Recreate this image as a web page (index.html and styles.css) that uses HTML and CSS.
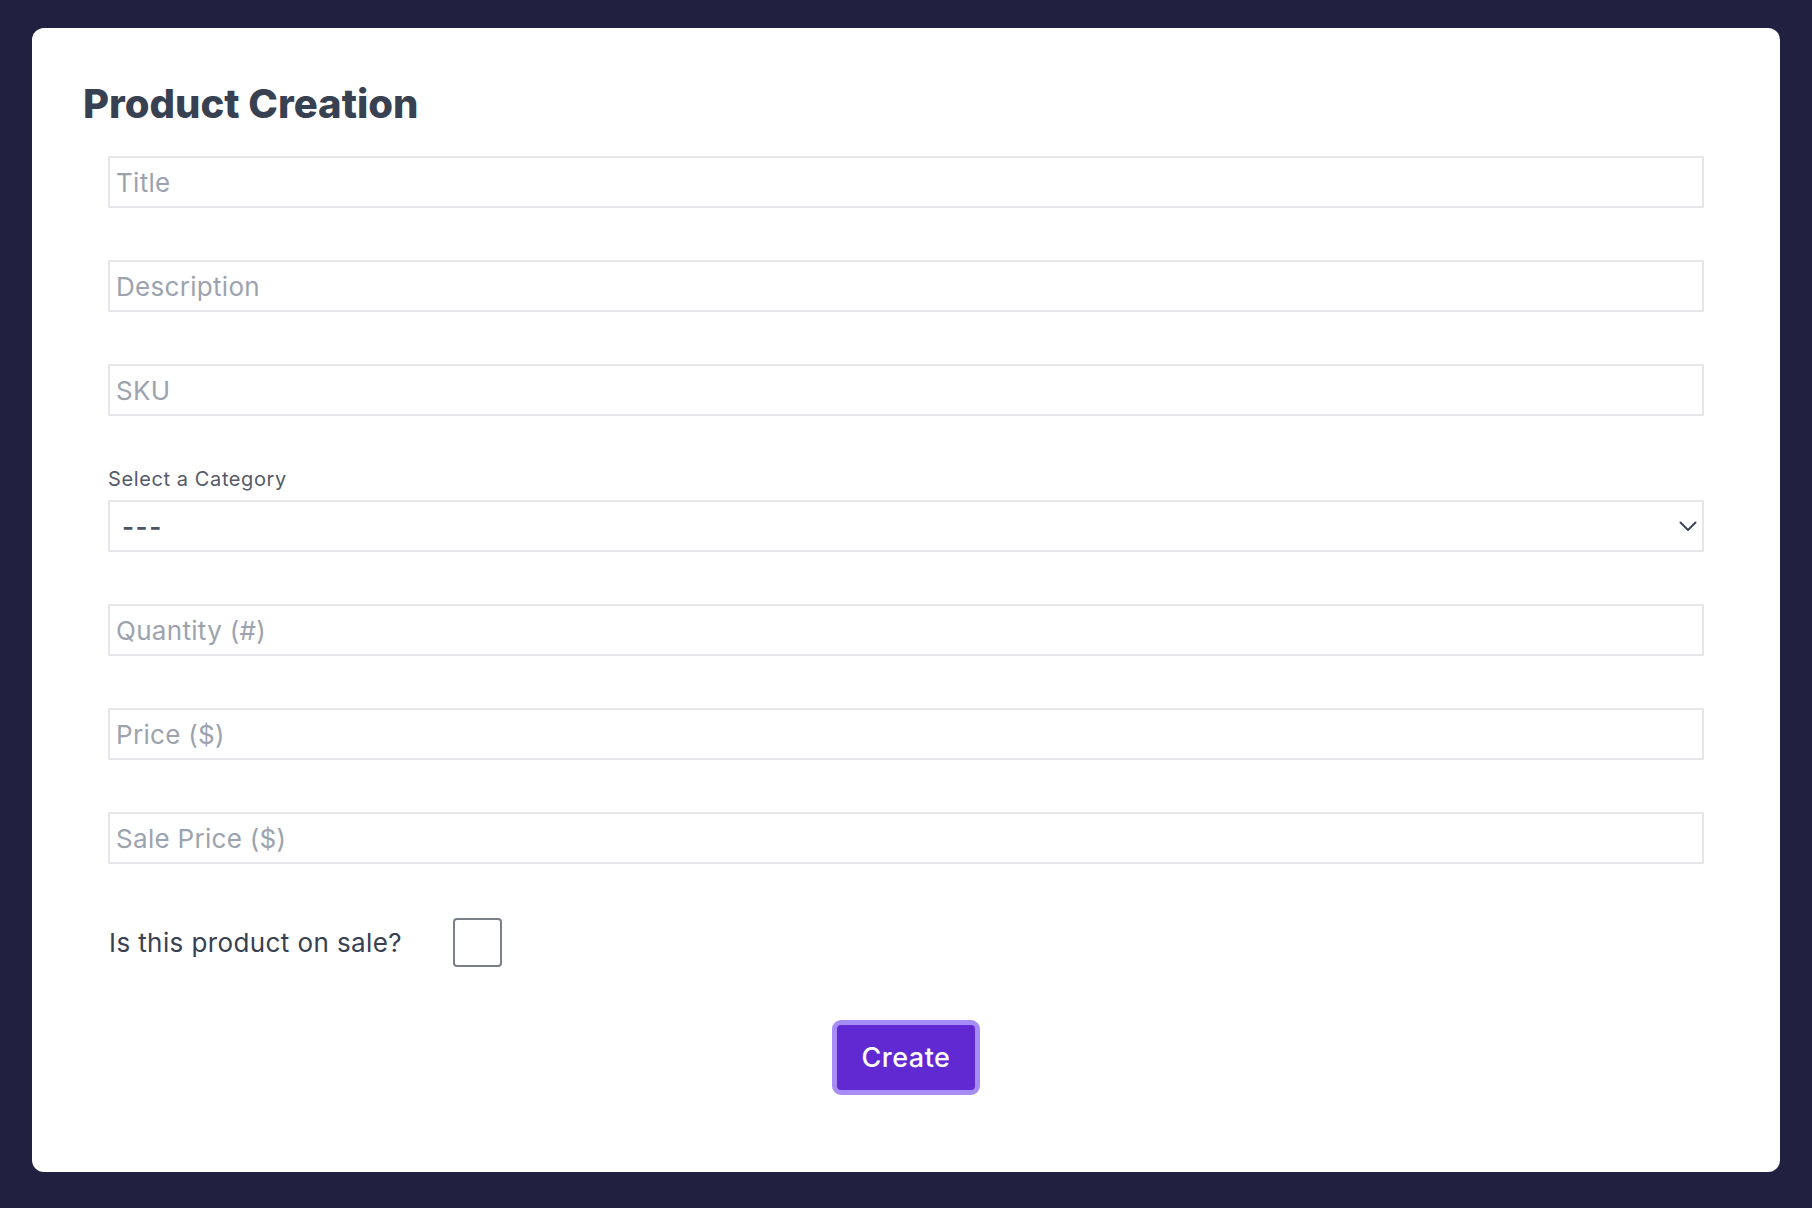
FILE: index.html
```html
<!DOCTYPE html>
<html lang="en">
<head>
<meta charset="utf-8">
<title>Product Creation</title>
<link rel="stylesheet" href="styles.css">
</head>
<body>
  <main class="card">
    <h1 class="card-title">Product Creation</h1>
    <form class="product-form">
      <input class="field" type="text" placeholder="Title">
      <input class="field" type="text" placeholder="Description">
      <input class="field" type="text" placeholder="SKU">
      <div class="select-group">
        <label class="select-label" for="category">Select a Category</label>
        <div class="select-wrap">
          <select id="category" class="field select">
            <option>---</option>
          </select>
          <svg class="chevron" width="18" height="11" viewBox="0 0 18 11" aria-hidden="true">
            <path d="M1.5 1.5 L9 9 L16.5 1.5" fill="none" stroke="#3f4553" stroke-width="2" stroke-linecap="round" stroke-linejoin="round"/>
          </svg>
        </div>
      </div>
      <input class="field" type="text" placeholder="Quantity (#)">
      <input class="field" type="text" placeholder="Price ($)">
      <input class="field" type="text" placeholder="Sale Price ($)">
      <div class="sale-row">
        <label class="sale-label" for="onsale">Is this product on sale?</label>
        <input id="onsale" class="checkbox" type="checkbox">
      </div>
      <div class="actions">
        <button type="button" class="btn-create">Create</button>
      </div>
    </form>
  </main>
</body>
</html>
```

FILE: styles.css
```css
* { box-sizing: border-box; }

html, body {
  margin: 0;
  padding: 0;
}

body {
  background: #202141;
  padding: 28px 32px 36px 32px;
  font-family: Inter, "Open Sans", "Liberation Sans", sans-serif;
}

.card {
  background: #ffffff;
  border-radius: 12px;
  padding: 50px 48px 77px 48px;
}

.card-title {
  margin: 0 0 0 3px;
  font-size: 40px;
  line-height: 52px;
  font-weight: 800;
  color: #374151;
}

.product-form {
  margin: 26px 28px 0 28px;
  display: flex;
  flex-direction: column;
  gap: 52px;
}

.field {
  display: block;
  width: 100%;
  height: 52px;
  border: 2px solid #e5e7eb;
  border-radius: 0;
  background: #ffffff;
  padding: 0 6px;
  font-family: inherit;
  font-size: 26px;
  letter-spacing: 0.3px;
  color: #374151;
  outline: none;
}

.field::placeholder {
  color: #9ca3af;
}

.select-group {
  display: flex;
  flex-direction: column;
  gap: 9px;
}

.select-label {
  font-size: 20px;
  line-height: 23px;
  color: #555a68;
  letter-spacing: 0.6px;
}

.select-wrap {
  position: relative;
}

.select {
  appearance: none;
  -webkit-appearance: none;
  padding: 0 12px;
  color: #4b5563;
  font-size: 26px;
  font-weight: 600;
  letter-spacing: 1.5px;
}

.chevron {
  position: absolute;
  right: 7px;
  top: 21px;
  pointer-events: none;
}

.sale-row {
  display: flex;
  align-items: center;
  height: 52px;
}

.sale-label {
  width: 345px;
  padding-left: 1px;
  font-size: 26px;
  letter-spacing: 0.4px;
  color: #374151;
}

.checkbox {
  appearance: none;
  -webkit-appearance: none;
  margin: 0;
  width: 49px;
  height: 49px;
  border: 2px solid #7b7f87;
  border-radius: 4px;
  background: #ffffff;
}

.actions {
  display: flex;
  justify-content: center;
}

.btn-create {
  width: 148px;
  height: 75px;
  background: #6129d1;
  border: 5px solid #a68cf5;
  border-radius: 9px;
  color: #ffffff;
  font-family: inherit;
  font-size: 27px;
  font-weight: 500;
  letter-spacing: 0.5px;
  cursor: pointer;
}
```
